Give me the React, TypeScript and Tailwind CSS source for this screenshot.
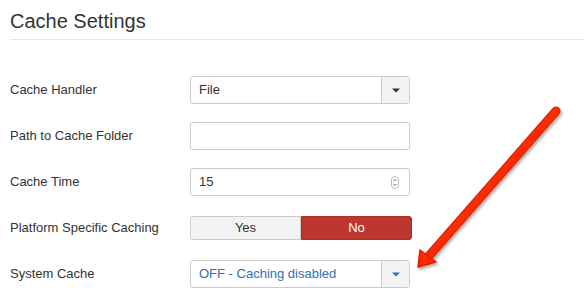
import React from 'react'

const labelCls = "w-[180px] shrink-0 text-[13px] text-[#333]"

function Caret() {
  return (
    <svg width="8" height="5" viewBox="0 0 8 5"><path d="M0 0.5h8L4 4.5z" fill="#333" /></svg>
  )
}

function Select({ value, blue }: { value: string; blue?: boolean }) {
  return (
    <div className="flex h-[28px] w-[220px] rounded-[3px] border border-[#ccc] bg-white overflow-hidden">
      <div className={`flex-1 flex items-center pl-[8px] text-[13px] ${blue ? 'text-[#2f6fae]' : 'text-[#333]'}`}>{value}</div>
      <div className="w-[28px] flex items-center justify-center border-l border-[#ccc] bg-[#f3f3f3]">
        <svg width="8" height="5" viewBox="0 0 8 5"><path d="M0 0.5h8L4 4.5z" fill={blue ? '#2f6fae' : '#333'} /></svg>
      </div>
    </div>
  )
}

function Row({ label, children }: { label: string; children: React.ReactNode }) {
  return (
    <div className="flex items-center h-[28px]">
      <div className={labelCls}>{label}</div>
      {children}
    </div>
  )
}

function Arrow() {
  return (
    <svg className="absolute left-0 top-0 pointer-events-none" width="584" height="308" viewBox="0 0 584 308">
      <defs>
        <filter id="sh" x="-20%" y="-20%" width="140%" height="140%">
          <feDropShadow dx="1.5" dy="2" stdDeviation="1.5" floodColor="#000" floodOpacity="0.35" />
        </filter>
      </defs>
      <g filter="url(#sh)">
        <line x1="556" y1="111" x2="428" y2="257" stroke="#d42200" strokeWidth="9" strokeLinecap="round" />
        <line x1="556" y1="111" x2="428" y2="257" stroke="#ff2a00" strokeWidth="7" strokeLinecap="round" />
        <path d="M418 267 L420 250 L436 262 Z" fill="#ff2a00" stroke="#d42200" strokeWidth="1.5" strokeLinejoin="round" />
      </g>
    </svg>
  )
}

export default function App() {
  return (
    <div className="relative w-[584px] h-[308px] overflow-hidden bg-white font-['Liberation_Sans',Arial,sans-serif]">
      <div className="pl-[10px] pt-[10px]">
        <h2 className="text-[20px] leading-[22px] text-[#333] pb-[7px] border-b border-[#e5e5e5]">Cache Settings</h2>
        <div className="mt-[36px] flex flex-col gap-[18px]">
          <Row label="Cache Handler">
            <Select value="File" />
          </Row>
          <Row label="Path to Cache Folder">
            <div className="h-[28px] w-[220px] rounded-[3px] border border-[#ccc] bg-white" />
          </Row>
          <Row label="Cache Time">
            <div className="h-[28px] w-[220px] rounded-[3px] border border-[#ccc] bg-white flex items-center pl-[8px] pr-[10px] text-[13px] text-[#333]">
              <span className="flex-1">15</span>
              <svg width="8" height="13" viewBox="0 0 8 13">
                <rect x="0.5" y="0.5" width="7" height="12" rx="3.5" fill="#fff" stroke="#bbb" />
                <path d="M2.5 5L4 3.5L5.5 5M2.5 8L4 9.5L5.5 8" fill="none" stroke="#555" strokeWidth="0.9" />
              </svg>
            </div>
          </Row>
          <Row label="Platform Specific Caching">
            <div className="flex h-[24px] w-[222px] text-[13px]">
              <div className="flex-1 flex items-center justify-center rounded-l-[3px] border border-[#ccc] bg-[#f3f3f3] text-[#333]">Yes</div>
              <div className="flex-1 flex items-center justify-center rounded-r-[3px] border border-[#b12e26] bg-[#bd362f] text-white">No</div>
            </div>
          </Row>
          <Row label="System Cache">
            <Select value="OFF - Caching disabled" blue />
          </Row>
        </div>
      </div>
      <Arrow />
    </div>
  )
}
